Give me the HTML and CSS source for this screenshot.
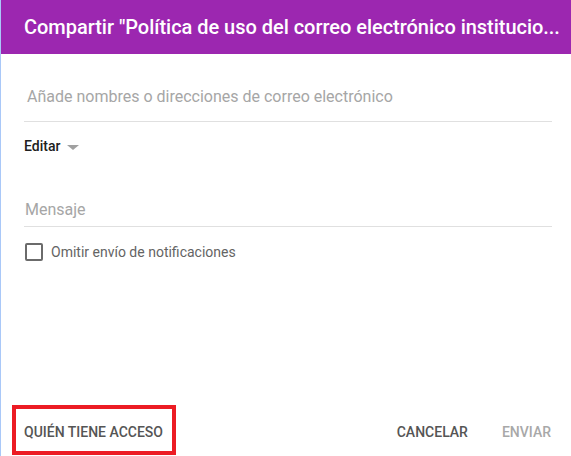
FILE: index.html
```html
<!DOCTYPE html>
<html lang="es">
<head>
<meta charset="utf-8">
<title>Compartir</title>
<link rel="stylesheet" href="styles.css">
</head>
<body>
<div class="dialog">
  <header class="header">
    <h1 class="title">Compartir "Política de uso del correo electrónico institucio...</h1>
  </header>
  <main class="content">
    <div class="field field-people">
      <span class="placeholder">Añade nombres o direcciones de correo electrónico</span>
    </div>
    <div class="perm">
      <span class="perm-label">Editar</span>
      <span class="caret"></span>
    </div>
    <div class="field field-msg">
      <span class="placeholder">Mensaje</span>
    </div>
    <label class="check">
      <span class="box"></span>
      <span class="check-label">Omitir envío de notificaciones</span>
    </label>
  </main>
  <footer class="footer">
    <span class="btn btn-access">QUIÉN TIENE ACCESO</span>
    <div class="actions">
      <span class="btn">CANCELAR</span>
      <span class="btn btn-disabled">ENVIAR</span>
    </div>
    <span class="highlight"></span>
  </footer>
</div>
</body>
</html>
```

FILE: styles.css
```css
html, body {
  margin: 0;
  padding: 0;
  background: #ffffff;
}
body {
  font-family: Roboto, "Liberation Sans", Arial, sans-serif;
}
.dialog {
  position: relative;
  width: 571px;
  height: 456px;
  box-sizing: border-box;
  border-left: 1px solid #a9c8f8;
  display: flex;
  flex-direction: column;
  overflow: hidden;
}
.header {
  height: 54px;
  background: #9c27b0;
  display: flex;
  align-items: center;
  padding-left: 23px;
  margin-left: -1px;
  border-left: 1px solid #7a4fc6;
}
.title {
  margin: 0;
  color: #ffffff;
  font-size: 20px;
  font-weight: 500;
  line-height: 24px;
  white-space: nowrap;
  letter-spacing: -0.03px;
}
.content {
  padding: 0 19px 0 23px;
  display: flex;
  flex-direction: column;
}
.field {
  border-bottom: 1px solid #e0e0e0;
}
.placeholder {
  color: #a6a6a6;
  font-size: 16px;
  line-height: 24px;
  display: block;
}
.field-people {
  padding: 31px 0 12px 3px;
}
.perm {
  margin-top: 14px;
  height: 20px;
  display: flex;
  align-items: center;
}
.perm-label {
  font-size: 14px;
  font-weight: 500;
  color: #202020;
  line-height: 20px;
}
.caret {
  width: 0;
  height: 0;
  border-left: 6px solid transparent;
  border-right: 6px solid transparent;
  border-top: 5px solid #a0a0a0;
  margin-left: 7px;
  margin-top: 3px;
}
.field-msg {
  margin-top: 42px;
  padding: 0 0 4px 1px;
}
.check {
  margin-top: 16px;
  display: flex;
  align-items: center;
  height: 18px;
}
.box {
  width: 18px;
  height: 18px;
  box-sizing: border-box;
  border: 2px solid #6b6b6b;
  border-radius: 2px;
  margin-left: 1px;
}
.check-label {
  margin-left: 8px;
  font-size: 14px;
  color: #646464;
}
.footer {
  margin-top: auto;
  height: 48px;
  display: flex;
  align-items: center;
  justify-content: space-between;
  padding: 0 20px 0 23px;
}
.actions {
  display: flex;
  gap: 34px;
}
.btn {
  font-size: 14px;
  font-weight: 500;
  color: #555555;
  line-height: 20px;
}
.btn-disabled {
  color: #a8a8a8;
}
.highlight {
  position: absolute;
  left: 11px;
  top: 405px;
  width: 164px;
  height: 50px;
  box-sizing: border-box;
  border: 4px solid #ec1c24;
}
```
